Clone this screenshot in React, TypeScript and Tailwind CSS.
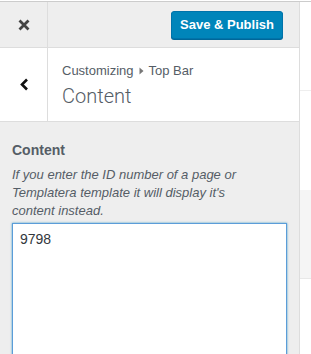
import React from "react";

const sans = "font-['Liberation_Sans',Arial,sans-serif]";

const CloseIcon = () => (
  <svg width="12" height="12" viewBox="0 0 12 12" className="text-[#444]">
    <path d="M1.5 1.5 L10.5 10.5 M10.5 1.5 L1.5 10.5" stroke="currentColor" strokeWidth="2.8" strokeLinecap="butt" />
  </svg>
);

const BackIcon = () => (
  <svg width="10" height="13" viewBox="0 0 10 13" className="text-[#111]">
    <path d="M8 1.5 L3 6.5 L8 11.5" fill="none" stroke="currentColor" strokeWidth="2.6" />
  </svg>
);

export default function App() {
  return (
    <div className={`w-[311px] h-[354px] overflow-hidden bg-white ${sans}`}>
      <div className="h-px bg-white" />
      <div className="flex h-[353px] border-t border-[#ccc]">
        {/* customizer sidebar */}
        <aside className="w-[300px] shrink-0 flex flex-col bg-[#eee] border-r border-[#ddd]">
          <header className="flex h-[46px] shrink-0 items-start border-b border-[#ddd]">
            <button className="flex h-[45px] w-[48px] items-center justify-center border-r border-[#ddd]">
              <CloseIcon />
            </button>
            <div className="flex flex-1 justify-end pr-[16px] pt-[9px]">
              <button className="h-[28px] w-[112px] rounded-[3px] border border-[#0073aa] bg-[#0085ba] text-[13px] font-bold text-white shadow-[0_1px_0_#006799]">
                Save &amp; Publish
              </button>
            </div>
          </header>

          <div className="flex h-[74px] shrink-0 border-b border-[#ddd] bg-white">
            <button className="flex w-[48px] items-center justify-center border-r border-[#ddd]">
              <BackIcon />
            </button>
            <div className="flex flex-col pl-[14px] pt-[14px] text-[#555d66]">
              <span className="flex items-center gap-[5px] text-[13px] leading-[18px]">
                Customizing
                <svg width="5" height="8" viewBox="0 0 5 8">
                  <path d="M0.5 0.5 L4.5 4 L0.5 7.5 Z" fill="#777" />
                </svg>
                Top Bar
              </span>
              <h2 className="mt-[3px] font-['Roboto',sans-serif] text-[20px] font-light leading-[26px]">
                Content
              </h2>
            </div>
          </div>

          <div className="shrink-0 px-[12px] pt-[19px]">
            <label className="block text-[14px] font-bold leading-[18px] text-[#555d66]">Content</label>
            <p className="mt-[7px] max-w-[256px] text-[13px] italic leading-[18px] text-[#555d66]">
              If you enter the ID number of a page or Templatera template it will display it's content instead.
            </p>
            <textarea
              defaultValue="9798"
              className="mt-[3px] block h-[150px] w-full resize-none border border-[#5b9dd9] bg-white px-[7px] py-[5px] text-[14px] leading-[20px] text-[#32373c] shadow-[0_0_2px_rgba(30,140,190,0.8)] outline-none"
            />
          </div>
        </aside>

        {/* preview pane */}
        <div className="flex flex-1 flex-col bg-white">
          <div className="h-[89px] shrink-0 border-b border-[#eee]" />
          <div className="h-[99px] shrink-0" />
          <div className="h-[89px] shrink-0 border-b border-[#e8e8e8] bg-[#f5f5f5]" />
        </div>
      </div>
    </div>
  );
}
